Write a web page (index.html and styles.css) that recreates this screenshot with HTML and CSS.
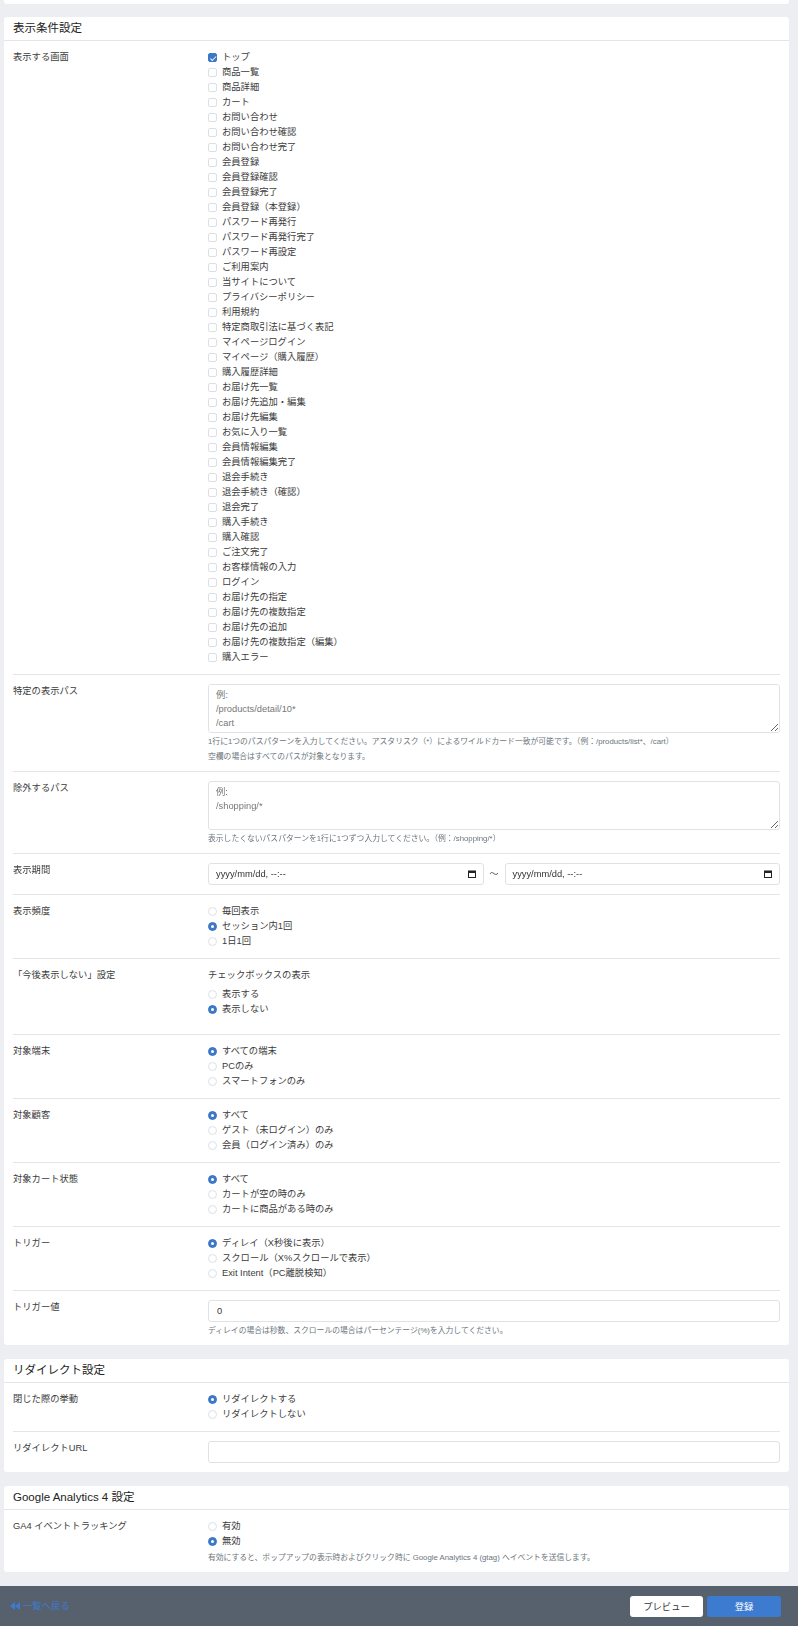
FILE: index.html
```html
<!DOCTYPE html>
<html lang="ja">
<head>
  <meta charset="UTF-8">
  <meta name="viewport" content="width=device-width, initial-scale=1.0">
  <title>ポップアップ登録</title>
  <link rel="stylesheet" href="styles.css">
</head>
<body>

  <div class="page">

    <!-- Previous card (cut off at the top) -->
    <div class="card card-stub"></div>

    <!-- 表示条件設定 -->
    <div class="card">
      <div class="card-header">表示条件設定</div>
      <div class="card-body">

        <div class="form-row">
          <div class="form-label">表示する画面</div>
          <div class="form-value">
            <label class="opt"><input type="checkbox" checked><span class="box"></span>トップ</label>
            <label class="opt"><input type="checkbox"><span class="box"></span>商品一覧</label>
            <label class="opt"><input type="checkbox"><span class="box"></span>商品詳細</label>
            <label class="opt"><input type="checkbox"><span class="box"></span>カート</label>
            <label class="opt"><input type="checkbox"><span class="box"></span>お問い合わせ</label>
            <label class="opt"><input type="checkbox"><span class="box"></span>お問い合わせ確認</label>
            <label class="opt"><input type="checkbox"><span class="box"></span>お問い合わせ完了</label>
            <label class="opt"><input type="checkbox"><span class="box"></span>会員登録</label>
            <label class="opt"><input type="checkbox"><span class="box"></span>会員登録確認</label>
            <label class="opt"><input type="checkbox"><span class="box"></span>会員登録完了</label>
            <label class="opt"><input type="checkbox"><span class="box"></span>会員登録（本登録）</label>
            <label class="opt"><input type="checkbox"><span class="box"></span>パスワード再発行</label>
            <label class="opt"><input type="checkbox"><span class="box"></span>パスワード再発行完了</label>
            <label class="opt"><input type="checkbox"><span class="box"></span>パスワード再設定</label>
            <label class="opt"><input type="checkbox"><span class="box"></span>ご利用案内</label>
            <label class="opt"><input type="checkbox"><span class="box"></span>当サイトについて</label>
            <label class="opt"><input type="checkbox"><span class="box"></span>プライバシーポリシー</label>
            <label class="opt"><input type="checkbox"><span class="box"></span>利用規約</label>
            <label class="opt"><input type="checkbox"><span class="box"></span>特定商取引法に基づく表記</label>
            <label class="opt"><input type="checkbox"><span class="box"></span>マイページログイン</label>
            <label class="opt"><input type="checkbox"><span class="box"></span>マイページ（購入履歴）</label>
            <label class="opt"><input type="checkbox"><span class="box"></span>購入履歴詳細</label>
            <label class="opt"><input type="checkbox"><span class="box"></span>お届け先一覧</label>
            <label class="opt"><input type="checkbox"><span class="box"></span>お届け先追加・編集</label>
            <label class="opt"><input type="checkbox"><span class="box"></span>お届け先編集</label>
            <label class="opt"><input type="checkbox"><span class="box"></span>お気に入り一覧</label>
            <label class="opt"><input type="checkbox"><span class="box"></span>会員情報編集</label>
            <label class="opt"><input type="checkbox"><span class="box"></span>会員情報編集完了</label>
            <label class="opt"><input type="checkbox"><span class="box"></span>退会手続き</label>
            <label class="opt"><input type="checkbox"><span class="box"></span>退会手続き（確認）</label>
            <label class="opt"><input type="checkbox"><span class="box"></span>退会完了</label>
            <label class="opt"><input type="checkbox"><span class="box"></span>購入手続き</label>
            <label class="opt"><input type="checkbox"><span class="box"></span>購入確認</label>
            <label class="opt"><input type="checkbox"><span class="box"></span>ご注文完了</label>
            <label class="opt"><input type="checkbox"><span class="box"></span>お客様情報の入力</label>
            <label class="opt"><input type="checkbox"><span class="box"></span>ログイン</label>
            <label class="opt"><input type="checkbox"><span class="box"></span>お届け先の指定</label>
            <label class="opt"><input type="checkbox"><span class="box"></span>お届け先の複数指定</label>
            <label class="opt"><input type="checkbox"><span class="box"></span>お届け先の追加</label>
            <label class="opt"><input type="checkbox"><span class="box"></span>お届け先の複数指定（編集）</label>
            <label class="opt"><input type="checkbox"><span class="box"></span>購入エラー</label>
          </div>
        </div>

        <div class="form-row has-help">
          <div class="form-label">特定の表示パス</div>
          <div class="form-value">
            <textarea class="form-control" placeholder="例:&#10;/products/detail/10*&#10;/cart"></textarea>
            <p class="help">1行に1つのパスパターンを入力してください。アスタリスク（*）によるワイルドカード一致が可能です。（例：/products/list*、/cart）<br>空欄の場合はすべてのパスが対象となります。</p>
          </div>
        </div>

        <div class="form-row has-help">
          <div class="form-label">除外するパス</div>
          <div class="form-value">
            <textarea class="form-control" placeholder="例:&#10;/shopping/*"></textarea>
            <p class="help">表示したくないパスパターンを1行に1つずつ入力してください。（例：/shopping/*）</p>
          </div>
        </div>

        <div class="form-row">
          <div class="form-label">表示期間</div>
          <div class="form-value date-range">
            <div class="date-field">
              <span>yyyy/mm/dd, --:--</span>
              <svg class="cal-icon" viewBox="0 0 8 8" width="8" height="8"><rect x="0.5" y="1" width="7" height="6.5" fill="none" stroke="#222" stroke-width="1"/><rect x="0.5" y="1" width="7" height="2" fill="#222"/></svg>
            </div>
            <span class="tilde">〜</span>
            <div class="date-field">
              <span>yyyy/mm/dd, --:--</span>
              <svg class="cal-icon" viewBox="0 0 8 8" width="8" height="8"><rect x="0.5" y="1" width="7" height="6.5" fill="none" stroke="#222" stroke-width="1"/><rect x="0.5" y="1" width="7" height="2" fill="#222"/></svg>
            </div>
          </div>
        </div>

        <div class="form-row">
          <div class="form-label">表示頻度</div>
          <div class="form-value">
            <label class="opt"><input type="radio" name="freq"><span class="dot"></span>毎回表示</label>
            <label class="opt"><input type="radio" name="freq" checked><span class="dot"></span>セッション内1回</label>
            <label class="opt"><input type="radio" name="freq"><span class="dot"></span>1日1回</label>
          </div>
        </div>

        <div class="form-row">
          <div class="form-label">「今後表示しない」設定</div>
          <div class="form-value">
            <div class="sub-label">チェックボックスの表示</div>
            <div class="opt-group">
              <label class="opt"><input type="radio" name="dont_show"><span class="dot"></span>表示する</label>
              <label class="opt"><input type="radio" name="dont_show" checked><span class="dot"></span>表示しない</label>
            </div>
          </div>
        </div>

        <div class="form-row">
          <div class="form-label">対象端末</div>
          <div class="form-value">
            <label class="opt"><input type="radio" name="device" checked><span class="dot"></span>すべての端末</label>
            <label class="opt"><input type="radio" name="device"><span class="dot"></span>PCのみ</label>
            <label class="opt"><input type="radio" name="device"><span class="dot"></span>スマートフォンのみ</label>
          </div>
        </div>

        <div class="form-row">
          <div class="form-label">対象顧客</div>
          <div class="form-value">
            <label class="opt"><input type="radio" name="customer" checked><span class="dot"></span>すべて</label>
            <label class="opt"><input type="radio" name="customer"><span class="dot"></span>ゲスト（未ログイン）のみ</label>
            <label class="opt"><input type="radio" name="customer"><span class="dot"></span>会員（ログイン済み）のみ</label>
          </div>
        </div>

        <div class="form-row">
          <div class="form-label">対象カート状態</div>
          <div class="form-value">
            <label class="opt"><input type="radio" name="cart" checked><span class="dot"></span>すべて</label>
            <label class="opt"><input type="radio" name="cart"><span class="dot"></span>カートが空の時のみ</label>
            <label class="opt"><input type="radio" name="cart"><span class="dot"></span>カートに商品がある時のみ</label>
          </div>
        </div>

        <div class="form-row">
          <div class="form-label">トリガー</div>
          <div class="form-value">
            <label class="opt"><input type="radio" name="trigger" checked><span class="dot"></span>ディレイ（X秒後に表示）</label>
            <label class="opt"><input type="radio" name="trigger"><span class="dot"></span>スクロール（X%スクロールで表示）</label>
            <label class="opt"><input type="radio" name="trigger"><span class="dot"></span>Exit Intent（PC離脱検知）</label>
          </div>
        </div>

        <div class="form-row has-help">
          <div class="form-label">トリガー値</div>
          <div class="form-value">
            <input type="text" class="form-control" value="0">
            <p class="help">ディレイの場合は秒数、スクロールの場合はパーセンテージ(%)を入力してください。</p>
          </div>
        </div>

      </div>
    </div>

    <!-- リダイレクト設定 -->
    <div class="card">
      <div class="card-header">リダイレクト設定</div>
      <div class="card-body">
        <div class="form-row">
          <div class="form-label">閉じた際の挙動</div>
          <div class="form-value">
            <label class="opt"><input type="radio" name="redirect" checked><span class="dot"></span>リダイレクトする</label>
            <label class="opt"><input type="radio" name="redirect"><span class="dot"></span>リダイレクトしない</label>
          </div>
        </div>
        <div class="form-row">
          <div class="form-label">リダイレクトURL</div>
          <div class="form-value">
            <input type="text" class="form-control">
          </div>
        </div>
      </div>
    </div>

    <!-- Google Analytics 4 設定 -->
    <div class="card">
      <div class="card-header">Google Analytics 4 設定</div>
      <div class="card-body">
        <div class="form-row has-help">
          <div class="form-label">GA4 イベントトラッキング</div>
          <div class="form-value">
            <label class="opt"><input type="radio" name="ga4"><span class="dot"></span>有効</label>
            <label class="opt"><input type="radio" name="ga4" checked><span class="dot"></span>無効</label>
            <p class="help">有効にすると、ポップアップの表示時およびクリック時に Google Analytics 4 (gtag) へイベントを送信します。</p>
          </div>
        </div>
      </div>
    </div>

  </div>

  <!-- Footer bar -->
  <div class="footer">
    <a href="#" class="back-link">
      <svg viewBox="0 0 10 8" width="10" height="8"><polygon points="5,0 5,8 0,4" fill="currentColor"/><polygon points="10,0 10,8 5,4" fill="currentColor"/></svg>
      一覧へ戻る
    </a>
    <div class="footer-buttons">
      <button type="button" class="btn btn-light">プレビュー</button>
      <button type="submit" class="btn btn-primary">登録</button>
    </div>
  </div>

</body>
</html>
```

FILE: styles.css
```css
/* Reset */
* {
  margin: 0;
  padding: 0;
  box-sizing: border-box;
}

body {
  font-family: "Liberation Sans", "Noto Sans CJK JP", sans-serif;
  font-size: 9.3px;
  line-height: 15px;
  color: #3c3c3c;
  background-color: #eceef1;
}

.page {
  padding: 0 9px 0 4px;
}

/* Cards */
.card {
  background-color: #fff;
  border-radius: 3px;
  margin-bottom: 14px;
}
.card-stub {
  height: 4px;
  border-radius: 0 0 3px 3px;
  margin-bottom: 13px;
}
.card-header {
  height: 24px;
  line-height: 23px;
  padding: 0 9px;
  font-size: 11.5px;
  color: #222;
  border-bottom: 1px solid #e3e5e9;
}
.card-body {
  padding: 0 9px;
}

/* Form rows */
.form-row {
  display: grid;
  grid-template-columns: 195px 1fr;
  padding: 9px 0;
  border-bottom: 1px solid #e3e5e9;
}
.form-row:last-child {
  border-bottom: none;
}
.form-row.has-help {
  padding-bottom: 7px;
}
.sub-label {
  margin-bottom: 4px;
}
.opt-group {
  margin-bottom: 8px;
}

/* Checkbox / radio options */
.opt {
  display: flex;
  align-items: center;
  height: 15px;
  cursor: pointer;
}
.opt input {
  display: none;
}
.opt .box,
.opt .dot {
  position: relative;
  width: 9px;
  height: 9px;
  margin-right: 5px;
  border: 1px solid #dcdfe3;
  background-color: #fff;
  flex-shrink: 0;
}
.opt .box {
  border-radius: 2px;
}
.opt .dot {
  border-radius: 50%;
}
.opt input:checked + .box,
.opt input:checked + .dot {
  background-color: #3b78c8;
  border-color: #3b78c8;
}
.opt input:checked + .box::after {
  content: "";
  position: absolute;
  left: 2.5px;
  top: 0.5px;
  width: 2px;
  height: 4.5px;
  border: solid #fff;
  border-width: 0 1.2px 1.2px 0;
  transform: rotate(45deg);
}
.opt input:checked + .dot::after {
  content: "";
  position: absolute;
  left: 2px;
  top: 2px;
  width: 3px;
  height: 3px;
  border-radius: 50%;
  background-color: #fff;
}

/* Inputs */
.form-control {
  display: block;
  width: 100%;
  height: 22px;
  padding: 0 8px;
  border: 1px solid #dfe2e6;
  border-radius: 3px;
  font-family: inherit;
  font-size: 9.3px;
  color: #333;
  background-color: #fff;
}
textarea.form-control {
  height: 49px;
  padding: 3px 7px;
  line-height: 14px;
  resize: vertical;
}
.form-control::placeholder {
  color: #777;
}
.help {
  margin-top: 1px;
  font-size: 7.8px;
  color: #6c757d;
}

/* Date range */
.date-range {
  display: flex;
  align-items: center;
}
.date-field {
  flex: 1;
  display: flex;
  align-items: center;
  justify-content: space-between;
  height: 22px;
  padding: 0 7px;
  border: 1px solid #dfe2e6;
  border-radius: 3px;
  color: #333;
}
.cal-icon {
  display: block;
}
.tilde {
  width: 21px;
  text-align: center;
  color: #555;
}

/* Footer bar */
.footer {
  display: flex;
  justify-content: space-between;
  align-items: center;
  height: 40px;
  padding: 0 17px 0 10px;
  background-color: #56616d;
}
.back-link {
  display: flex;
  align-items: center;
  gap: 3px;
  color: #3d7bd0;
  text-decoration: none;
}
.footer-buttons {
  display: flex;
  gap: 4px;
}
.btn {
  width: 73px;
  height: 21px;
  border: none;
  border-radius: 3px;
  font-family: inherit;
  font-size: 9.3px;
  cursor: pointer;
}
.btn-light {
  background-color: #fff;
  color: #333;
}
.btn-primary {
  width: 74px;
  background-color: #3d7bd0;
  color: #fff;
}
```
